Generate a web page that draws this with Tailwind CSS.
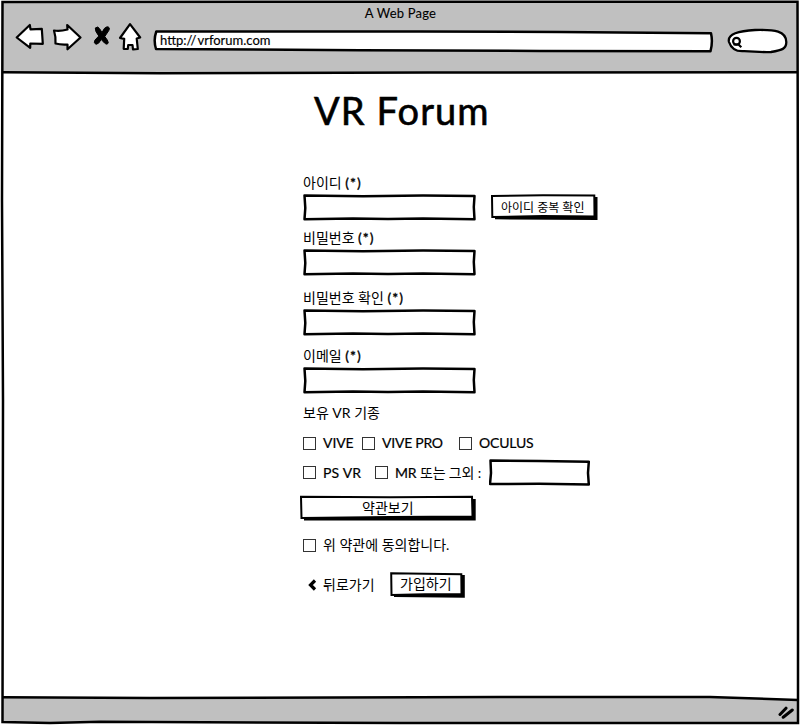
<!DOCTYPE html>
<html lang="ko">
<head>
<meta charset="utf-8">
<title>VR Forum</title>
<script src="https://cdn.jsdelivr.net/npm/@tailwindcss/browser@4"></script>
</head>
<body class="bg-white">
<svg class="hidden">
  <symbol id="field" viewBox="0 0 173 27">
    <path d="M1.5 1.5L60 2.2L120 1.6L171.5 2L170.8 13L171.5 25.2L120 24.6L85 25L50 24.4L1.5 25.3L2.3 14Z" fill="#fff" stroke="#000" stroke-width="2.5" stroke-linejoin="round"/>
  </symbol>
</svg>
<div class="relative flex h-[725px] w-[800px] flex-col overflow-hidden font-['Lato','Noto_Sans_CJK_KR',sans-serif] text-sm text-black">
  <header class="ml-[3px] mt-[2px] h-[71px] w-[795px] bg-[#c0c0c0]">
    <div class="flex h-[20px] justify-center pt-[2px]"><span class="whitespace-nowrap text-[13px] leading-[18px] tracking-[0.2px] [-webkit-text-stroke:0.1px_black]">A Web Page</span></div>
    <nav class="flex h-[32px] pl-[11px]">
      <svg class="h-[32px] w-[34px]" viewBox="14 22 34 32" fill="#fff" stroke="#000" stroke-width="2.2" stroke-linejoin="round"><path d="M16.7 37.5L29.8 25L30.5 29.3L41.8 28.8L42.8 43.8L30.3 43.5L30.2 47.8Z"/></svg>
      <svg class="h-[32px] w-[42px]" viewBox="48 22 42 32" fill="#fff" stroke="#000" stroke-width="2.2" stroke-linejoin="round"><path d="M54 30.5Q60 31.5 67.5 29.5L67.2 25L80.5 37.5L67.5 49.3L67.5 44.5Q61 45 55.5 43.5Q56 37 54 30.5Z"/></svg>
      <svg class="h-[32px] w-[27px]" viewBox="90 22 27 32" fill="#000" stroke="#000" stroke-width="1" stroke-linejoin="round"><path d="M95.3 28Q98 25.5 99.8 29L102 32.5Q104.5 27 107 26.8Q110.5 27 108.8 30.5L104.8 36.5Q108 40.5 108.3 42.5Q107.5 45.5 104.5 43L101.2 39.5Q98.5 44.5 96 44.3Q93 43 95 40L98.8 36Q94.8 31 95.3 28Z"/></svg>
      <svg class="h-[32px] w-[36px]" viewBox="117 22 36 32" fill="#fff" stroke="#000" stroke-width="2.2" stroke-linejoin="round"><path d="M130 24.2L140.2 37.5L136.7 38.5L137.8 49L133 49.4L132.5 45L128.2 45L127.8 49L123.7 48.8L124.2 38.8L120 38Z"/></svg>
      <div class="relative h-[32px] w-[561px]">
        <svg class="absolute h-[32px] w-[561px]" viewBox="153 22 561 32"><path d="M156.3 31.5L420 31.5L560 32L711 33.2Q713 42 710.5 51.3L540 51L360 50.2L156 49Q153.2 40 156.3 31.5Z" fill="#fff" stroke="#000" stroke-width="2.5" stroke-linejoin="round"/></svg>
        <span class="relative ml-[7px] mt-[9px] block w-max text-[13px] leading-[18px] [-webkit-text-stroke:0.15px_black]">http:<span class="tracking-[1px]">//</span>vrforum.com</span>
      </div>
      <svg class="h-[32px] w-[80px]" viewBox="714 22 80 32" fill="none" stroke="#000" stroke-width="2.3"><path d="M729 42C727 34 739 30.8 755 30C775 29.5 786 31 786.3 42C786.5 49 782 50 771 52C759 52.5 752 51 743 51.2C735 51.5 731 48 729 42Z" fill="#fff"/><circle cx="736.5" cy="41.3" r="3.4" stroke-width="2.2"/><path d="M738.5 44.5L741.3 47.3M733.5 44.5H739" stroke-width="2.2"/></svg>
    </nav>
  </header>

  <main class="flex h-[624px] flex-col pl-[303px]">
    <h1 class="ml-[11px] mt-[9px] h-[57px] whitespace-nowrap text-[38px] leading-[57px] tracking-[1.1px] [-webkit-text-stroke:0.6px_black] [stroke-linejoin:round]">VR Forum</h1>
    <label class="mt-[34px] flex h-[20px] items-center whitespace-pre">아이디 <span class="tracking-[1px] [-webkit-text-stroke:0.35px_black]">(*)</span></label>
    <div class="mt-[1px] flex h-[27px] gap-[15px]">
      <svg class="h-[27px] w-[173px]"><use href="#field"/></svg>
      <button class="relative h-[26px] w-[107px] text-[12px]"><svg class="absolute inset-0 h-[26px] w-[107px]"><path d="M4 3H106.5V26L4 25.3Z"/><path d="M1 2L52 1.3L103.3 1.5L103.5 22.5L52 22L1.3 23Z" fill="#fff" stroke="#000" stroke-width="2"/></svg><span class="absolute left-[10px] top-[5px] whitespace-nowrap leading-[18px]">아이디 중복 확인</span></button>
    </div>
    <label class="mt-[7px] flex h-[20px] items-center whitespace-pre">비밀번호 <span class="tracking-[1px] [-webkit-text-stroke:0.35px_black]">(*)</span></label>
    <svg class="mt-[1px] h-[27px] w-[173px]"><use href="#field"/></svg>
    <label class="mt-[12px] flex h-[20px] items-center whitespace-pre">비밀번호 확인 <span class="tracking-[1px] [-webkit-text-stroke:0.35px_black]">(*)</span></label>
    <svg class="mt-[1px] h-[27px] w-[173px]"><use href="#field"/></svg>
    <label class="mt-[10px] flex h-[20px] items-center whitespace-pre">이메일 <span class="tracking-[1px] [-webkit-text-stroke:0.35px_black]">(*)</span></label>
    <svg class="mt-[1px] h-[27px] w-[173px]"><use href="#field"/></svg>
    <div class="mt-[9px] flex h-[20px] items-center whitespace-pre">보유 VR 기종</div>
    <div class="mt-[10px] flex h-[20px] items-center whitespace-nowrap [-webkit-text-stroke:0.2px_black]">
      <span class="mr-[7px] size-[13px] border border-[#333]"></span><span class="w-[39px] tracking-[-0.1px]">VIVE</span>
      <span class="mr-[7px] size-[13px] border border-[#333]"></span><span class="w-[77px] tracking-[-0.25px]">VIVE PRO</span>
      <span class="mr-[7px] size-[13px] border border-[#333]"></span><span class="tracking-[-0.2px]">OCULUS</span>
    </div>
    <div class="mt-[6px] flex h-[27px] items-center whitespace-nowrap">
      <span class="mr-[7px] size-[13px] border border-[#333]"></span><span class="w-[52px] tracking-[0.2px] [-webkit-text-stroke:0.2px_black]">PS VR</span>
      <span class="mr-[7px] size-[13px] border border-[#333]"></span><span class="w-[94px] tracking-[-0.15px]"><span class="[-webkit-text-stroke:0.2px_black]">MR</span> 또는 그외 :</span>
      <svg class="h-[27px] w-[101px]" viewBox="0 0 101 27"><path d="M1.5 1.5L50 2L99.8 2.8L99 14L99.8 25.5L50 24.8L1 25L2 14Z" fill="#fff" stroke="#000" stroke-width="2.5" stroke-linejoin="round"/></svg>
    </div>
    <button class="relative -ml-[3px] mt-[9px] h-[26px] w-[176px]"><svg class="absolute inset-0 h-[26px] w-[176px]"><path d="M4 4H175.7V25.6L4 25.6Z"/><path d="M1 1.7L90 2.2L172 1.7L172.5 21.5L90 22L1.5 23Z" fill="#fff" stroke="#000" stroke-width="2"/></svg><span class="absolute left-[62px] top-[3px] whitespace-nowrap leading-[20px]">약관보기</span></button>
    <div class="mt-[14px] flex h-[20px] items-center whitespace-nowrap"><span class="mr-[7px] size-[13px] border border-[#333]"></span>위 약관에 동의합니다.</div>
    <div class="mt-[16px] flex h-[27px] items-center whitespace-nowrap">
      <svg class="ml-[4px] mr-[6px] h-[12px] w-[10px]" fill="none" stroke="#000" stroke-width="3.2"><path d="M8 1.5L3.5 6L8 10.5"/></svg><span class="w-[67px]">뒤로가기</span>
      <button class="relative h-[26px] w-[75px]"><svg class="absolute inset-0 h-[26px] w-[75px]"><path d="M4 3H74.8V25.8L4 25Z"/><path d="M1.2 1.2L35 1.8L71.3 2.2L71.5 22L35 22.3L1.5 23Z" fill="#fff" stroke="#000" stroke-width="2"/></svg><span class="absolute left-[10px] top-[2px] leading-[20px]">가입하기</span></button>
    </div>
  </main>

  <footer class="relative z-10 ml-[3px] flex h-[26px] w-[795px] justify-end">
    <svg class="mt-[7px] h-[16px] w-[20px]" fill="none" stroke="#000" stroke-width="3" stroke-linecap="round"><path d="M2 10.5L8 4.2M5.2 13.2L14.3 6"/></svg>
  </footer>
  <svg class="pointer-events-none absolute inset-0 h-[725px] w-[800px]" fill="none" stroke="#000" stroke-width="2.5">
    <path d="M3 697.3L150 698L500 697L710 697L798 700V723H3Z" fill="#c0c0c0" stroke="none"/>
    <path d="M2.5 2L400 1.8L797.5 1.8L798 250L798 500L798 723L400 723L100 721.8L50 723L2.5 722L3 400L2 200Z"/>
    <path d="M3 72.3L160 73.2L430 72.5L798 72.3"/>
    <path d="M3 697.3L150 698L500 697L710 697L798 700"/>
  </svg>
</div>
</body>
</html>
